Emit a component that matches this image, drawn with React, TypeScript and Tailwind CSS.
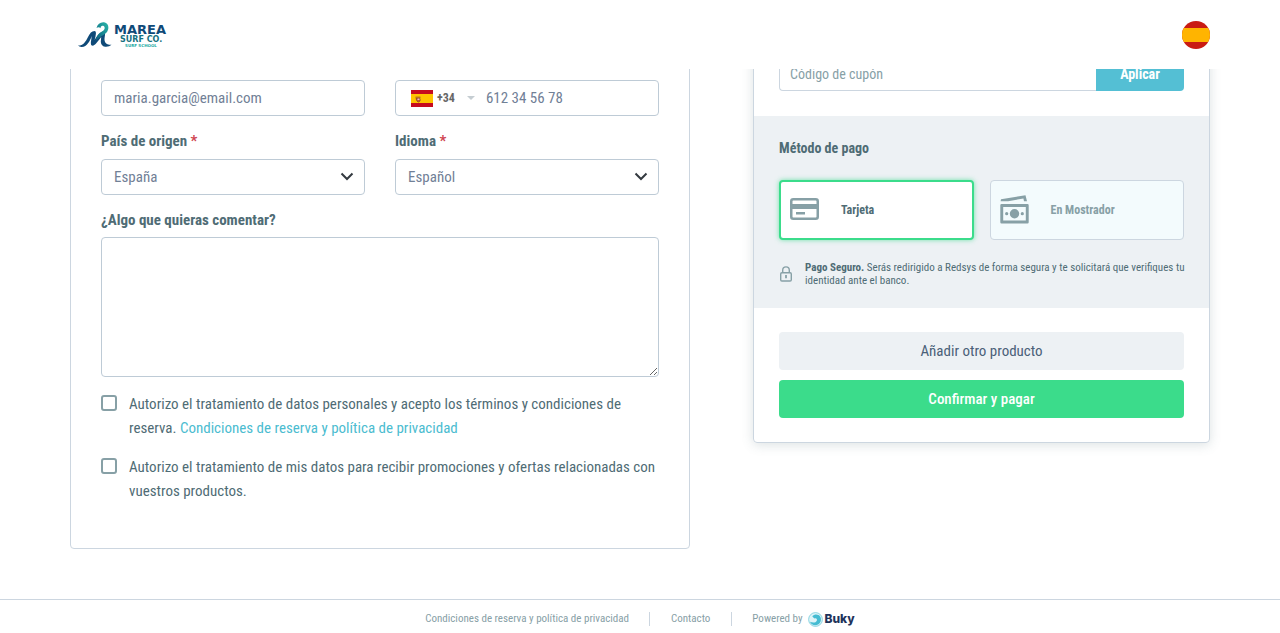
import React, { useState } from "react";

const control =
  "w-full rounded border border-[#becbd6] bg-white text-[15px] text-[#718096] outline-none focus:border-[#52bfd3]";
const labelText = "block text-[15px] leading-6 font-bold text-[#4f6c75]";

function BrandLogo() {
  return (
    <svg width="92" height="30" viewBox="0 0 92 30" role="img" aria-label="Marea Surf Co.">
      <defs>
        <linearGradient id="wave" x1="0" y1="1" x2="1" y2="0">
          <stop offset="0" stopColor="#12607f" />
          <stop offset="0.4" stopColor="#16808f" />
          <stop offset="1" stopColor="#2bb9aa" />
        </linearGradient>
      </defs>
      <path
        d="M0 25.600C5 25.800 7.500 22 10 17C12 13 13.500 11 16.500 11C18.500 11.200 18 14 17.500 16.500L16.600 20C19 16.500 21.500 12.500 25 11.600C27.500 11.300 27.300 14 26.700 17C26 21 26.800 24.800 33.500 24.800C30.500 27.600 23 28.200 22.800 21.500L23.200 17C20.500 20 18.500 24 15.600 25.600C12.500 26.500 12.600 23 13.200 20L13.800 16C11.800 21 9 27.200 3.500 27C2 27 .8 26.500 0 25.600Z"
        fill="#0f4a78"
      />
      <path
        d="M18.500 8C19.500 4 22.500 1.900 26 2.300C30.500 3 31.500 8 29.300 11.500C27 15 22 16 17.500 21C18.300 16 20.500 13 24 11.500C26.800 10 27.500 7.500 25.700 6C24 5 22.300 6.300 22.600 8.300C21.300 7 20 7 18.500 8Z"
        fill="url(#wave)"
      />
      <text x="36" y="14" fontFamily="'DejaVu Sans', sans-serif" fontWeight="700" fontSize="13" fill="#0f4a78">MAREA</text>
      <text x="42" y="22" fontFamily="'DejaVu Sans', sans-serif" fontWeight="700" fontSize="8" fill="#16717f">SURF CO.</text>
      <text x="47" y="27" fontFamily="'DejaVu Sans', sans-serif" fontWeight="700" fontSize="4" fill="#25aaa5">SURF SCHOOL</text>
    </svg>
  );
}

function SpainRound() {
  return (
    <svg width="28" height="28" viewBox="0 0 28 28" aria-hidden="true">
      <clipPath id="round"><circle cx="14" cy="14" r="14" /></clipPath>
      <g clipPath="url(#round)">
        <path fill="#c91b13" d="M0 0h28v28H0z" />
        <path fill="#ffb400" d="M0 7h28v14H0z" />
      </g>
    </svg>
  );
}

function SpainFlag() {
  return (
    <svg width="22" height="17" viewBox="0 0 22 17" aria-hidden="true">
      <path fill="#c60b1e" d="M0 0h22v17H0z" />
      <path fill="#ffc400" d="M0 4h22v9H0z" />
      <path d="M4.500 7.200h5M5 8.500h4v2.500q-2 2-3 0z" fill="#c9602b" stroke="#9c5028" strokeWidth="1" />
      <path d="M6.500 8.500h2v1.500h-2z" fill="#e8b7c8" />
    </svg>
  );
}

function CardIcon() {
  return (
    <svg width="29" height="22" viewBox="0 0 29 22" fill="none" aria-hidden="true">
      <rect x="1.250" y="1.250" width="26.500" height="19.500" rx="2" stroke="#87a0a6" strokeWidth="2.500" />
      <path fill="#87a0a6" d="M1 6h27v5H1zM6 14h9v2.500H6z" />
    </svg>
  );
}

function CashIcon() {
  return (
    <svg width="29" height="29" viewBox="0 0 29 29" fill="#87a0a6" aria-hidden="true">
      <path d="M1 4.300L25.500.2L27 6.200H24L23.400 3.600L8 6.200H.6z" />
      <path
        fillRule="evenodd"
        d="M1.500 9h26a1.200 1.200 0 0 1 1.200 1.200v17a1.200 1.200 0 0 1-1.200 1.200h-26A1.200 1.200 0 0 1 .3 27.200v-17A1.200 1.200 0 0 1 1.500 9zM3.200 12v13.400h22.600V12z"
      />
      <circle cx="14.500" cy="18.700" r="4.700" />
      <circle cx="6.700" cy="18.700" r="1.600" />
      <circle cx="22.300" cy="18.700" r="1.600" />
    </svg>
  );
}

function LockIcon() {
  return (
    <svg width="14" height="16" viewBox="0 0 14 16" fill="none" stroke="#87a0a6" strokeWidth="1.400" className="shrink-0" aria-hidden="true">
      <rect x="1.700" y="6.700" width="10.600" height="8.300" rx="1.200" />
      <path d="M3.700 6.500V4.200a3.300 3.300 0 0 1 6.600 0v2.300" />
      <path d="M7 9v3.200" strokeWidth="1.800" />
    </svg>
  );
}

function BukyLogo() {
  return (
    <span className="flex items-center gap-0.5">
      <svg width="15" height="15" viewBox="0 0 15 15" aria-hidden="true">
        <circle cx="7.500" cy="7.500" r="6.900" fill="#dff4f8" stroke="#72cbdc" strokeWidth="0.800" />
        <path d="M4.300 4.200C6.500 1.800 10.800 2 12.400 5C14 8.500 12 12.800 8 13.200C5 13.400 2.800 12 2 9.800C4.500 11 7.800 11 8.800 8.800C9.500 6.800 8 5.800 6.500 6.600C5.600 5.800 5 5 4.300 4.200Z" fill="#45bcd2" />
      </svg>
      <span className="font-['Inter',sans-serif] text-[12px] leading-4 font-extrabold text-[#1f335b]">Buky</span>
    </span>
  );
}

interface SelectFieldProps {
  id: string;
  label: string;
  options: string[];
}

function SelectField({ id, label, options }: SelectFieldProps) {
  return (
    <div>
      <label htmlFor={id} className={`${labelText} mb-1.5`}>
        {label} <span className="text-[#cf4550]">*</span>
      </label>
      <div className="relative">
        <select id={id} className={`${control} h-9 appearance-none pr-9 pl-3`}>
          {options.map((o) => (
            <option key={o}>{o}</option>
          ))}
        </select>
        <svg className="pointer-events-none absolute top-3 right-[11px]" width="14" height="12" viewBox="0 0 14 12" fill="none" stroke="#343a40" strokeWidth="2" aria-hidden="true">
          <path d="M1.500 2.500L7 8L12.500 2.500" />
        </svg>
      </div>
    </div>
  );
}

interface ConsentProps {
  id: string;
  children: React.ReactNode;
}

function Consent({ id, children }: ConsentProps) {
  return (
    <div className="flex items-start gap-3">
      <input
        id={id}
        type="checkbox"
        className="mt-[3px] size-4 shrink-0 appearance-none rounded-[3px] border-2 border-[#87a0a6] bg-white checked:bg-[#87a0a6]"
      />
      <label htmlFor={id} className="text-[15px] leading-6 text-[#4f6c75]">{children}</label>
    </div>
  );
}

export default function App() {
  const [method, setMethod] = useState("card");

  const methods = [
    { id: "card", name: "Tarjeta", icon: <CardIcon /> },
    { id: "desk", name: "En Mostrador", icon: <CashIcon /> },
  ];

  return (
    <div className="min-h-screen bg-white font-['Roboto_Condensed','Roboto',sans-serif]">
      <header className="sticky top-0 z-10 bg-white">
        <div className="mx-auto flex h-[69px] max-w-[1140px] items-center justify-between pl-2">
          <a href="#inicio"><BrandLogo /></a>
          <button type="button" aria-label="Cambiar idioma"><SpainRound /></button>
        </div>
      </header>

      {/* the cards scroll under the header */}
      <main className="mx-auto -mt-[30px] grid max-w-[1140px] grid-cols-[19fr_14fr] items-start gap-[63px] pb-[50px]">
        <form className="rounded border border-[#ccd6e0] px-[30px] pt-10 pb-[45px]">
          <div className="grid grid-cols-2 gap-x-[30px] gap-y-[13px]">
            <input type="email" aria-label="Email" defaultValue="maria.garcia@email.com" className={`${control} h-9 px-3`} />
            <div className={`${control} flex h-9 items-center pl-[15px]`}>
              <button type="button" className="flex shrink-0 items-center gap-1 text-[12px] font-bold text-[#666666]">
                <SpainFlag />
                +34
                <svg width="8" height="4" viewBox="0 0 8 4" className="ml-2" aria-hidden="true">
                  <path d="M0 0h8L4 4z" fill="#c5cdd2" />
                </svg>
              </button>
              <input type="tel" aria-label="Teléfono" defaultValue="612 34 56 78" className="ml-[11px] w-full min-w-0 outline-none" />
            </div>
            <SelectField id="country" label="País de origen" options={["España", "Francia", "Portugal"]} />
            <SelectField id="language" label="Idioma" options={["Español", "English", "Français"]} />
          </div>

          <label htmlFor="comment" className={`${labelText} mt-[13px] mb-[5px]`}>¿Algo que quieras comentar?</label>
          <textarea id="comment" className={`${control} block h-[140px] resize-y px-3 py-2`}></textarea>

          <div className="mt-[15px] flex flex-col gap-[15px]">
            <Consent id="terms">
              Autorizo el tratamiento de datos personales y acepto los términos y condiciones de reserva.{" "}
              <a href="#condiciones" className="text-[#4bbcd0]">Condiciones de reserva y política de privacidad</a>
            </Consent>
            <Consent id="promos">
              Autorizo el tratamiento de mis datos para recibir promociones y ofertas relacionadas con vuestros productos.
            </Consent>
          </div>
        </form>

        <aside className="rounded border border-[#ccd6e0] shadow-[0_2px_12px_rgba(79,108,117,0.2)]">
          <div className="flex px-[25px] pt-[17px] pb-[25px]">
            <input
              type="text"
              aria-label="Código de cupón"
              placeholder="Código de cupón"
              className="h-[34px] min-w-0 flex-1 rounded-l border border-r-0 border-[#ccd6e0] px-2.5 text-[14px] outline-none placeholder:text-[#87a0a6]"
            />
            <button type="button" className="h-[34px] w-[88px] rounded-r bg-[#54bfd4] text-[14px] font-bold text-white">Aplicar</button>
          </div>

          <div className="bg-[#edf1f4] px-[25px] pt-5 pb-[21px]">
            <h2 className="mb-5 text-[14px] leading-6 font-bold text-[#4f6c75]">Método de pago</h2>
            <div className="grid grid-cols-2 gap-4">
              {methods.map((m) => (
                <button
                  key={m.id}
                  type="button"
                  onClick={() => setMethod(m.id)}
                  className={
                    m.id === method
                      ? "flex h-[60px] items-center rounded border-2 border-[#3bdc8b] bg-white pl-[9px] text-[12px] font-bold text-[#4f6c75] shadow-[0_0_5px_rgba(59,220,139,0.7)]"
                      : "flex h-[60px] items-center rounded border border-[#ccd6e0] bg-[#f3fbfd] pl-[9px] text-[12px] font-bold text-[#87a0a6]"
                  }
                >
                  <span className="w-[51px] pb-0.5">{m.icon}</span>
                  {m.name}
                </button>
              ))}
            </div>
            <div className="-mr-1 mt-[21px] flex items-center gap-3">
              <LockIcon />
              <p className="text-[11px] leading-[13px] text-[#4f6c75]">
                <strong>Pago Seguro.</strong> Serás redirigido a Redsys de forma segura y te solicitará que verifiques tu
                identidad ante el banco.
              </p>
            </div>
          </div>

          <div className="flex flex-col gap-2.5 px-[25px] py-6">
            <button type="button" className="h-[38px] rounded bg-[#edf1f4] text-[15px] text-[#4a6078]">Añadir otro producto</button>
            <button type="button" className="h-[38px] rounded bg-[#3bdc8b] text-[15px] font-medium text-white">Confirmar y pagar</button>
          </div>
        </aside>
      </main>

      <footer className="flex items-center justify-center border-t border-[#ccd6e0] pt-[11px] pb-1 text-[11px] leading-4 text-[#87a0a6]">
        <a href="#condiciones" className="pr-5">Condiciones de reserva y política de privacidad</a>
        <a href="#contacto" className="border-x border-[#ccd6e0] px-[21px] leading-[14px]">Contacto</a>
        <span className="flex items-center gap-[5px] pl-5">
          Powered by
          <BukyLogo />
        </span>
      </footer>
    </div>
  );
}
